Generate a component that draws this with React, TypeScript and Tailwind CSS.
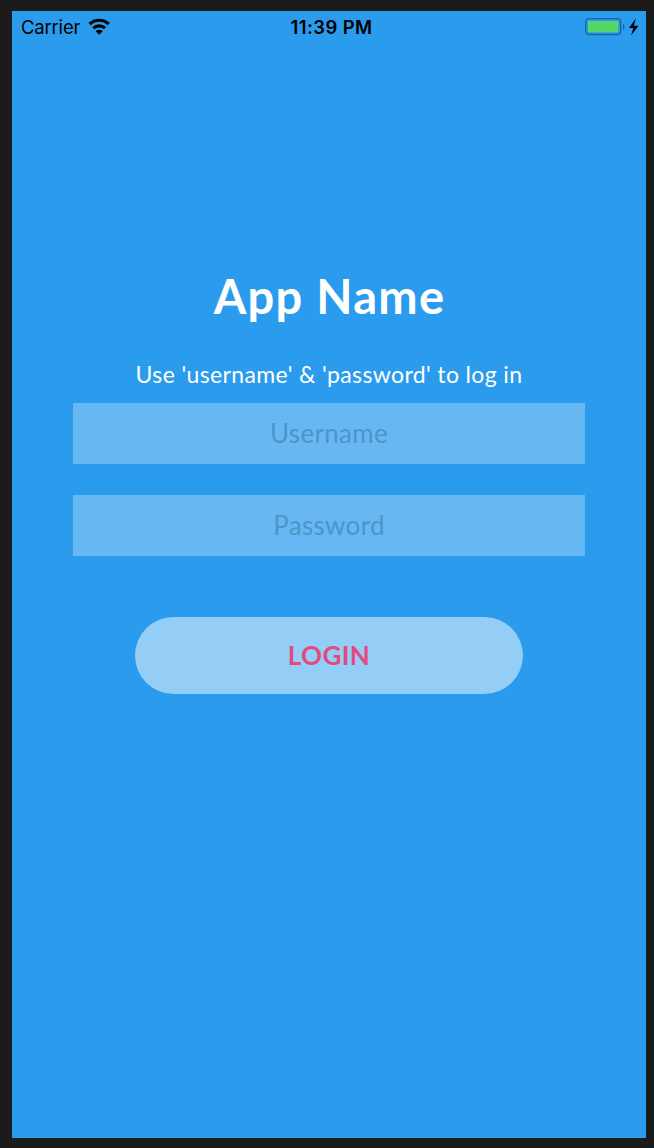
import React from "react";

function WifiIcon() {
  return (
    <svg className="h-[18px] w-[22px]" viewBox="0 0 22 18" fill="none" stroke="#000" strokeWidth="3.1">
      <path d="M1.6 6a14 14 0 0 1 19.2 0" />
      <path d="M5.3 10.2a8.6 8.6 0 0 1 11.8 0" />
      <path d="M11.2 16.7l-3.5-3.5a5 5 0 0 1 7 0z" fill="#000" stroke="none" />
    </svg>
  );
}

function BatteryIcon() {
  return (
    <svg className="h-[18px] w-[54px]" viewBox="0 0 54 18">
      <rect x="0.7" y="0.7" width="35" height="15.8" rx="3.4" fill="none" stroke="#1c639b" strokeWidth="1.3" />
      <rect x="3" y="3" width="30.2" height="11.2" rx="1" fill="#53d769" />
      <path d="M38 6.1c2.1.8 2.1 4.8 0 5.6z" fill="#1c639b" />
      <path d="M50.8.6L44 9.9h4.3l-2.2 7.6 7.4-9.8h-4.7z" fill="#000" />
    </svg>
  );
}

function StatusBar() {
  return (
    <header className="grid h-8 grid-cols-3 items-center pr-[7px] pl-[9px] font-[Inter,sans-serif] text-[18.5px] leading-none text-black">
      <div className="flex items-center gap-2">
        <span className="tracking-[-0.2px]">Carrier</span>
        <WifiIcon />
      </div>
      <span className="pl-[3px] text-center font-semibold tracking-[0.4px]">11:39 PM</span>
      <div className="flex justify-end">
        <BatteryIcon />
      </div>
    </header>
  );
}

const inputClass =
  "block h-[61px] w-full bg-[#67b8f2] pb-[2px] text-center text-[26px] tracking-[0.3px] text-[#1a5f95] outline-none placeholder:text-[#4f94c7] placeholder:opacity-100";

export default function App() {
  return (
    <div className="h-[1148px] w-[654px] bg-[#1b1b1b] pt-[11px] pr-2 pb-[10px] pl-3">
      <main className="flex h-full flex-col bg-[#2b9bed] font-[Lato,sans-serif]">
        <StatusBar />
        <form className="flex flex-col items-center px-[61px] pt-[223px]" onSubmit={(e) => e.preventDefault()}>
          <h1 className="h-[60px] pl-px text-[47px] leading-[60px] font-bold tracking-[1.3px] whitespace-nowrap text-white">App Name</h1>
          <p className="mt-[33px] h-[30px] text-[23px] leading-[30px] tracking-[0.37px] whitespace-nowrap text-white">
            Use 'username' &amp; 'password' to log in
          </p>
          <div className="mt-[14px] flex w-full flex-col gap-[31px]">
            <input className={inputClass} placeholder="Username" aria-label="Username" />
            <input className={inputClass} placeholder="Password" aria-label="Password" type="password" />
          </div>
          <button className="mt-[61px] h-[77px] w-[388px] rounded-full bg-[#94cef6] text-[26px] font-bold tracking-[0.4px] text-[#e04c80]">
            LOGIN
          </button>
        </form>
      </main>
    </div>
  );
}
